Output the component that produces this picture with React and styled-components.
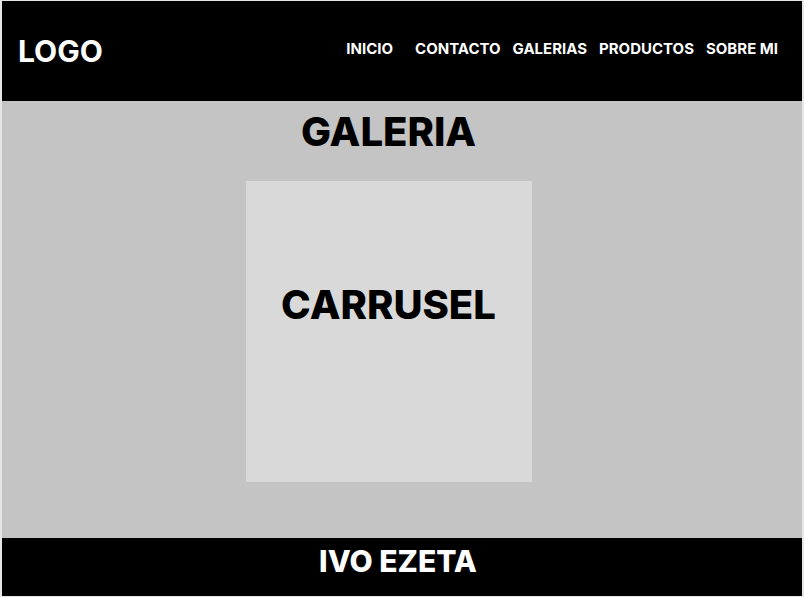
import React from 'react';
import styled, { createGlobalStyle } from 'styled-components';

const GlobalStyle = createGlobalStyle`
    html, body {
        margin: 0;
        padding: 0;
        background-color: #e6e6e6;
    }
    body {
        font-family: Inter, "Noto Sans", sans-serif;
    }
`

const Frame = styled.div`
    width: 800px;
    height: 595px;
    margin: 1px 2px;
    display: flex;
    flex-direction: column;
    background-color: #c4c4c4;
`

const Header = styled.header`
    height: 100px;
    display: flex;
    align-items: center;
    justify-content: space-between;
    padding: 0 24px 0 16px;
    background-color: #000000;
    color: #ffffff;
`

const Logo = styled.div`
    font-size: 30px;
    font-weight: 700;
    line-height: 1;
`

const Nav = styled.nav`
    display: flex;
    align-items: center;
    gap: 12px;
    margin-top: -6px;
`

const NavItem = styled.a`
    font-size: 15px;
    font-weight: 700;
    line-height: 1;
    color: #ffffff;
    text-decoration: none;
    margin-right: ${props => props.$extra || 0}px;
`

const Main = styled.main`
    flex: 1;
    display: flex;
    flex-direction: column;
    align-items: center;
    padding: 11px 27px 0 0;
`

const Title = styled.h1`
    margin: 0;
    font-size: 40px;
    font-weight: 800;
    line-height: 1;
    color: #000000;
`

// caja del carrusel
const Carousel = styled.div`
    width: 286px;
    height: 301px;
    margin-top: 29px;
    padding-top: 104px;
    box-sizing: border-box;
    text-align: center;
    background-color: #d9d9d9;
    font-size: 40px;
    font-weight: 800;
    line-height: 1;
    color: #000000;
`

const Footer = styled.footer`
    height: 58px;
    display: flex;
    align-items: center;
    justify-content: center;
    padding: 0 8px 12px 0;
    box-sizing: border-box;
    background-color: #000000;
    color: #ffffff;
    font-size: 30px;
    font-weight: 800;
    line-height: 1;
`

const links = [
    { label: 'INICIO', extra: 10 },
    { label: 'CONTACTO' },
    { label: 'GALERIAS' },
    { label: 'PRODUCTOS' },
    { label: 'SOBRE MI' },
];

const App = () => (
    <>
        <GlobalStyle />
        <Frame>
            <Header>
                <Logo>LOGO</Logo>
                <Nav>
                    {links.map(link => (
                        <NavItem key={link.label} href="#" $extra={link.extra}>
                            {link.label}
                        </NavItem>
                    ))}
                </Nav>
            </Header>
            <Main>
                <Title>GALERIA</Title>
                <Carousel>CARRUSEL</Carousel>
            </Main>
            <Footer>IVO EZETA</Footer>
        </Frame>
    </>
);

export default App;
